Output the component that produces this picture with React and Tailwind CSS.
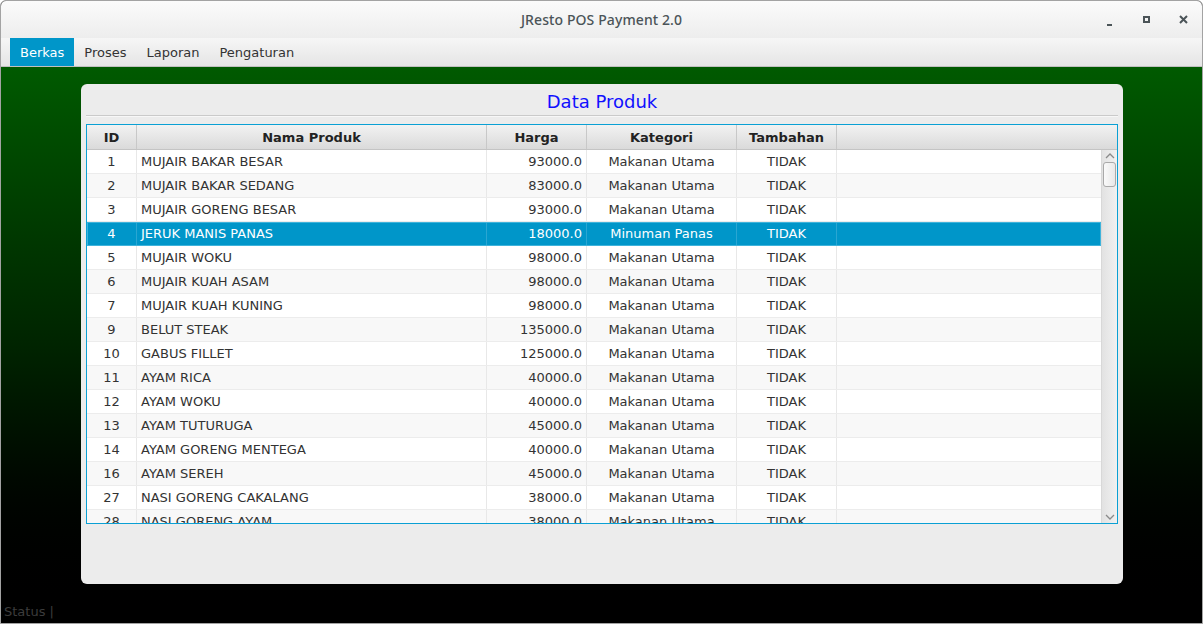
import React from 'react'

const rows = [
    { id: 1, nama: 'MUJAIR BAKAR BESAR', harga: '93000.0', kategori: 'Makanan Utama' },
    { id: 2, nama: 'MUJAIR BAKAR SEDANG', harga: '83000.0', kategori: 'Makanan Utama' },
    { id: 3, nama: 'MUJAIR GORENG BESAR', harga: '93000.0', kategori: 'Makanan Utama' },
    { id: 4, nama: 'JERUK MANIS PANAS', harga: '18000.0', kategori: 'Minuman Panas' },
    { id: 5, nama: 'MUJAIR WOKU', harga: '98000.0', kategori: 'Makanan Utama' },
    { id: 6, nama: 'MUJAIR KUAH ASAM', harga: '98000.0', kategori: 'Makanan Utama' },
    { id: 7, nama: 'MUJAIR KUAH KUNING', harga: '98000.0', kategori: 'Makanan Utama' },
    { id: 9, nama: 'BELUT STEAK', harga: '135000.0', kategori: 'Makanan Utama' },
    { id: 10, nama: 'GABUS FILLET', harga: '125000.0', kategori: 'Makanan Utama' },
    { id: 11, nama: 'AYAM RICA', harga: '40000.0', kategori: 'Makanan Utama' },
    { id: 12, nama: 'AYAM WOKU', harga: '40000.0', kategori: 'Makanan Utama' },
    { id: 13, nama: 'AYAM TUTURUGA', harga: '45000.0', kategori: 'Makanan Utama' },
    { id: 14, nama: 'AYAM GORENG MENTEGA', harga: '40000.0', kategori: 'Makanan Utama' },
    { id: 16, nama: 'AYAM SEREH', harga: '45000.0', kategori: 'Makanan Utama' },
    { id: 27, nama: 'NASI GORENG CAKALANG', harga: '38000.0', kategori: 'Makanan Utama' },
    { id: 28, nama: 'NASI GORENG AYAM', harga: '38000.0', kategori: 'Makanan Utama' },
]

const menus = ['Berkas', 'Proses', 'Laporan', 'Pengaturan']

const App = () => {
    return (
        <div className="w-[1203px] h-[624px] flex flex-col overflow-hidden rounded-t-[6px] border border-[#a3a3a3] bg-black" style={{ fontFamily: '"DejaVu Sans", Verdana, sans-serif' }}>

            {/* title bar */}
            <div className="relative h-[37px] shrink-0 flex items-center justify-center bg-gradient-to-b from-[#fbfbfb] to-[#ededed]">
                <span className="text-[14px] text-[#4b5458] font-medium tracking-[0.1px]" style={{ fontFamily: '"Noto Sans", "Open Sans", sans-serif' }}>JResto POS Payment 2.0</span>
                <div className="absolute right-0 top-0 h-full flex items-center">
                    <div className="w-[37px] flex justify-center pt-[4px]">
                        <div className="w-[5px] h-[2px] bg-[#4b5458] mt-[6px]"></div>
                    </div>
                    <div className="w-[37px] flex justify-center">
                        <div className="w-[7px] h-[7px] border-[2px] border-[#4b5458]"></div>
                    </div>
                    <div className="w-[37px] flex justify-center">
                        <svg width="9" height="9" viewBox="0 0 9 9"><path d="M1 1 L8 8 M8 1 L1 8" stroke="#4b5458" strokeWidth="2" /></svg>
                    </div>
                </div>
            </div>

            {/* menu bar */}
            <div className="h-[29px] shrink-0 flex items-stretch pl-[9px] bg-gradient-to-b from-[#f6f6f6] to-[#e5e5e5] border-b border-[#c0c0c0] text-[13px] text-[#333]">
                {menus.map((m, i) => (
                    <div key={m} className={`flex items-center pt-[2px] px-[10px] ${i === 0 ? 'bg-[#0096c9] text-white' : ''}`}>{m}</div>
                ))}
            </div>

            {/* body */}
            <div className="flex-1 flex flex-col bg-gradient-to-b from-[#005a00] via-[#002400] to-black">
                <div className="pl-[80px] pt-[17px]">
                    <div className="w-[1042px] h-[500px] rounded-[6px] bg-[#ececec] px-[5px] pt-[5px] flex flex-col">
                        <div className="h-[25px] flex items-center justify-center text-[18px] text-[#1010ff]">Data Produk</div>
                        <div className="h-[2px] mt-[1px] border-t border-[#cacaca] bg-white/60"></div>

                        {/* table */}
                        <div className="mt-[7px] w-[1032px] h-[400px] border border-[#0aa0d4] bg-white flex flex-col text-[13px] text-[#333]">
                            <div className="h-[25px] shrink-0 flex bg-gradient-to-b from-[#f2f2f2] to-[#dadada] border-b border-[#c4c4c4] font-bold text-[#222]">
                                <div className="w-[50px] flex items-center justify-center pt-[1px] border-r border-[#c8c8c8]">ID</div>
                                <div className="w-[350px] flex items-center justify-center pt-[1px] border-r border-[#c8c8c8]">Nama Produk</div>
                                <div className="w-[100px] flex items-center justify-center pt-[1px] border-r border-[#c8c8c8]">Harga</div>
                                <div className="w-[150px] flex items-center justify-center pt-[1px] border-r border-[#c8c8c8]">Kategori</div>
                                <div className="w-[100px] flex items-center justify-center pt-[1px] border-r border-[#c8c8c8]">Tambahan</div>
                                <div className="flex-1"></div>
                            </div>
                            <div className="flex-1 flex overflow-hidden">
                                <div className="flex-1 overflow-hidden">
                                    {rows.map((r, i) => {
                                        const sel = r.id === 4
                                        const bg = sel ? 'bg-[#0096c9] text-white outline outline-1 -outline-offset-1 outline-[#3fb3db]' : (i % 2 === 0 ? 'bg-white' : 'bg-[#f8f8f8]')
                                        const line = sel ? 'border-[#2aa6d2]' : 'border-[#e8e8e8]'
                                        return (
                                            <div key={r.id} className={`h-[24px] flex border-b ${sel ? 'border-[#0096c9]' : 'border-[#ececec]'} ${bg}`}>
                                                <div className={`w-[50px] flex items-center justify-center border-r ${line}`}>{r.id}</div>
                                                <div className={`w-[350px] flex items-center pl-[4px] border-r ${line}`}>{r.nama}</div>
                                                <div className={`w-[100px] flex items-center justify-end pr-[4px] border-r ${line}`}>{r.harga}</div>
                                                <div className={`w-[150px] flex items-center justify-center border-r ${line}`}>{r.kategori}</div>
                                                <div className={`w-[100px] flex items-center justify-center border-r ${line}`}>TIDAK</div>
                                                <div className="flex-1"></div>
                                            </div>
                                        )
                                    })}
                                </div>

                                {/* scrollbar */}
                                <div className="w-[16px] shrink-0 flex flex-col items-center bg-gradient-to-r from-[#e2e2e2] to-[#f1f1f1] border-l border-[#d8d8d8]">
                                    <svg width="10" height="6" viewBox="0 0 10 6" className="mt-[3px]"><path d="M1 5 L5 1 L9 5" stroke="#8a8a8a" strokeWidth="1.3" fill="none" /></svg>
                                    <div className="mt-[3px] w-[13px] h-[25px] rounded-[3px] border border-[#a9a9a9] bg-gradient-to-r from-[#fafafa] to-[#e8e8e8]"></div>
                                    <div className="flex-1"></div>
                                    <svg width="10" height="6" viewBox="0 0 10 6" className="mb-[3px]"><path d="M1 1 L5 5 L9 1" stroke="#8a8a8a" strokeWidth="1.3" fill="none" /></svg>
                                </div>
                            </div>
                        </div>
                    </div>
                </div>

                <div className="mt-auto h-[22px] flex items-center pl-[3px] text-[13px] text-[#3c3c3c]">Status |</div>
            </div>
        </div>
    )
}

export default App
